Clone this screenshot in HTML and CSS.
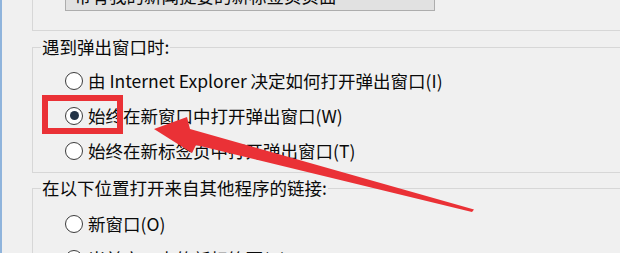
FILE: index.html
```html
<!DOCTYPE html>
<html lang="zh-CN">
<head>
<meta charset="utf-8">
<title>Internet 选项</title>
<link rel="stylesheet" href="styles.css">
</head>
<body>
<div class="window">
  <div class="group group-top">
    <div class="dropdown">带有我的新闻提要的新标签页页面</div>
  </div>
  <fieldset class="group">
    <legend>遇到弹出窗口时:</legend>
    <div class="row first"><span class="radio"></span><span>由 Internet Explorer 决定如何打开弹出窗口(I)</span></div>
    <div class="row"><span class="radio checked"></span><span>始终在新窗口中打开弹出窗口(W)</span></div>
    <div class="row"><span class="radio"></span><span>始终在新标签页中打开弹出窗口(T)</span></div>
  </fieldset>
  <fieldset class="group group-links">
    <legend>在以下位置打开来自其他程序的链接:</legend>
    <div class="row first"><span class="radio"></span><span>新窗口(O)</span></div>
    <div class="row"><span class="radio"></span><span>当前窗口中的新标签页(B)</span></div>
  </fieldset>
</div>
<svg class="annotation" width="620" height="253" viewBox="0 0 620 253">
  <rect x="45" y="98" width="75" height="33" fill="none" stroke="#ea3136" stroke-width="6"/>
  <polygon fill="#ea3136" points="154,129 187,117 190,129 474,209.5 472,212 196,145 192,153"/>
</svg>
</body>
</html>
```
FILE: styles.css
```css
html, body {
  margin: 0;
  padding: 0;
  height: 100%;
  overflow: hidden;
}
body {
  background: #f0f0f0;
  border-left: 2px solid #8fb4dc;
  box-sizing: border-box;
  font-family: "Noto Sans CJK SC", "Noto Sans", sans-serif;
  font-size: 17.5px;
  color: #0a0a0a;
  position: relative;
}
.window {
  width: 700px;
}
.group {
  margin: 0 0 0 30px;
  border: 1px solid #d7d7d7;
  border-right: 0;
  padding: 0 0 4px 0;
  min-width: 0;
}
.group-top {
  margin-top: -24px;
  border-top: 0;
  padding: 5px 0 19px 32px;
}
.dropdown {
  width: 360px;
  height: 28px;
  background: #e1e1e1;
  border: 1px solid #adadad;
  line-height: 28px;
  padding-left: 8px;
  box-sizing: content-box;
  white-space: nowrap;
  overflow: hidden;
}
fieldset.group {
  margin-top: 6px;
}
.group-links {
  margin-top: 5px !important;
}
legend {
  margin-left: 8px;
  padding: 0 1px;
  line-height: 20px;
  height: 20px;
}
.row {
  height: 35px;
  display: flex;
  align-items: center;
  padding-left: 32px;
  white-space: nowrap;
}
.row.first {
  margin-top: 6px;
}
.group-links .row.first {
  margin-top: 8px;
}
.radio {
  width: 18px;
  height: 18px;
  box-sizing: border-box;
  border: 1.5px solid #3c3c3c;
  border-radius: 50%;
  background: #fff;
  margin-right: 5px;
  flex: none;
  display: flex;
  align-items: center;
  justify-content: center;
}
.radio.checked::after {
  content: "";
  width: 9px;
  height: 9px;
  border-radius: 50%;
  background: #233448;
}
.annotation {
  position: absolute;
  left: -2px;
  top: 0;
  pointer-events: none;
}
```
